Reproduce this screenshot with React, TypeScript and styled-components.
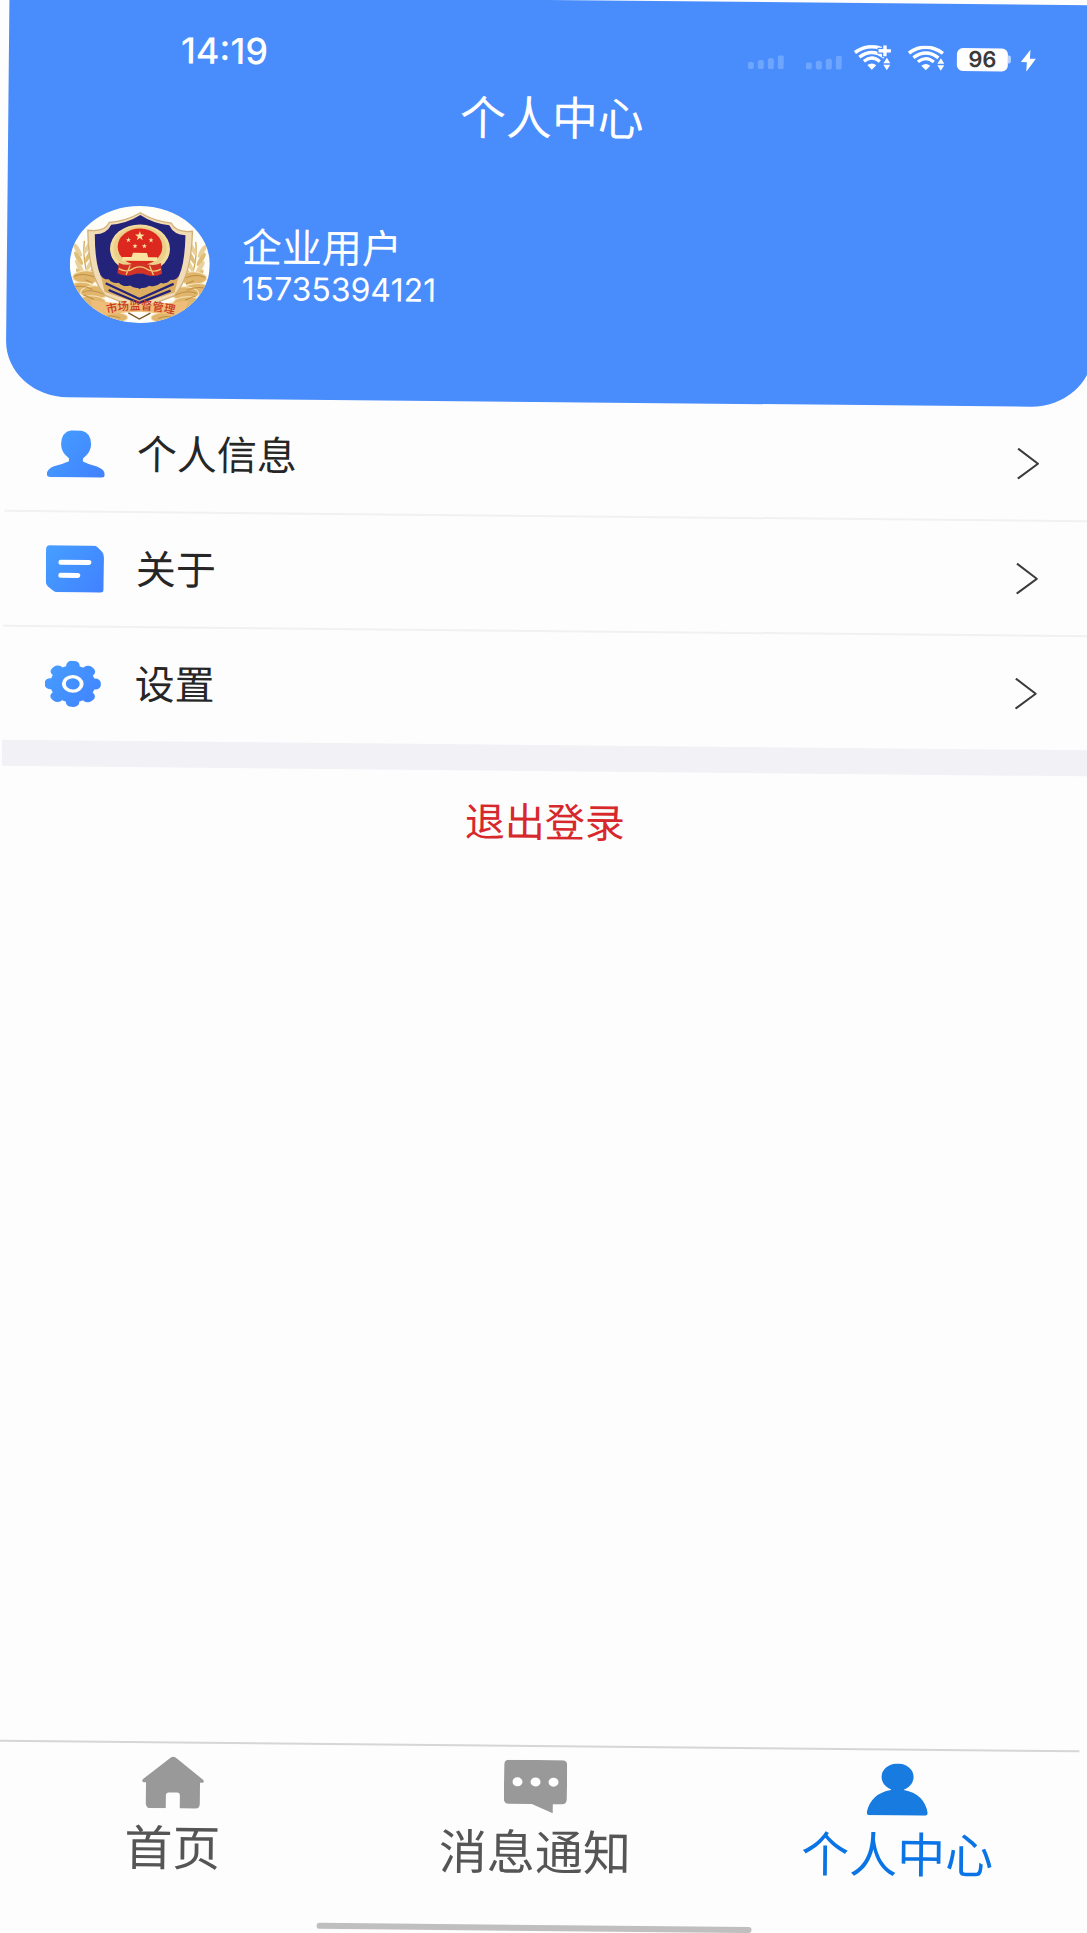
import type { ReactNode } from "react";
import styled, { createGlobalStyle } from "styled-components";

const palette = {
  page: "#fdfdfd",
  header: "#498cfb",
  ink: "#262626",
  line: "#f1f1f2",
  band: "#f1f1f6",
  danger: "#d7282c",
  tab: "#555555",
  tabIcon: "#999999",
  active: "#0a74e6",
  activeIcon: "#187be0",
};

const GlobalStyle = createGlobalStyle`
  * {
    box-sizing: border-box;
  }

  body {
    margin: 0;
    overflow: hidden;
    background: ${palette.page};
    font-family: Inter, "Noto Sans CJK SC", sans-serif;
  }

  svg {
    display: block;
    flex: none;
  }
`;

// the whole screen leans slightly clockwise
const Screen = styled.div`
  min-height: 100vh;
  display: flex;
  flex-direction: column;
  background: ${palette.page};
  transform: rotate(0.56deg);
`;

const Header = styled.header`
  height: 402px;
  padding: 32px 60px 0;
  background: ${palette.header};
  border-radius: 0 0 62px 62px / 0 0 56px 56px;
  color: white;
`;

const StatusBar = styled.div`
  height: 44px;
  display: flex;
  align-items: center;
  justify-content: space-between;
  padding-left: 112px;
`;

const Time = styled.span`
  font-size: 36px;
  font-weight: 500;
  line-height: 42px;
`;

const StatusIcons = styled.div`
  display: flex;
  align-items: flex-end;
  gap: 12px;
`;

const IconGroup = styled.div<{ $gap: number }>`
  display: flex;
  align-items: flex-end;
  gap: ${(props) => props.$gap}px;
`;

const Battery = styled.div`
  display: flex;
  align-items: center;
`;

const BatteryBody = styled.span`
  width: 51px;
  height: 23px;
  border-radius: 6px;
  background: white;
  color: #3a3a3a;
  font-size: 22px;
  font-weight: 600;
  line-height: 23px;
  text-align: center;
`;

const BatteryTip = styled.span`
  width: 3px;
  height: 8px;
  border-radius: 0 2px 2px 0;
  background: #b9d5ff;
`;

const Title = styled.h1`
  margin: 10px 0 0;
  font-size: 46px;
  font-weight: 400;
  line-height: 64px;
  text-align: center;
`;

const Profile = styled.div`
  display: flex;
  align-items: center;
  gap: 32px;
  margin: 60px 3px 0;
`;

const UserName = styled.div`
  font-size: 40px;
  line-height: 46px;
`;

const Phone = styled.div`
  font-size: 32px;
  line-height: 36px;
`;

const Menu = styled.nav`
  border-bottom: 26px solid ${palette.band};
`;

const MenuRow = styled.a`
  display: flex;
  align-items: center;
  gap: 32px;
  padding: 0 53px 0 42px;
  color: ${palette.ink};
  font-size: 40px;
  line-height: 113px;
  text-decoration: none;

  & + & {
    border-top: 2px solid ${palette.line};
  }
`;

const MenuLabel = styled.span`
  flex: 1;
`;

const Logout = styled.button`
  align-self: center;
  margin-top: 22px;
  padding: 0 20px;
  border: 0;
  background: none;
  color: ${palette.danger};
  font-family: inherit;
  font-size: 40px;
  line-height: 60px;
`;

const TabBar = styled.nav`
  height: 188px;
  margin-top: auto;
  display: flex;
  flex-direction: column;
  border-top: 2px solid #d6d6d6;
`;

const Tabs = styled.div`
  flex: 1;
  display: grid;
  grid-template-columns: repeat(3, 1fr);
`;

const Tab = styled.a<{ $active?: boolean }>`
  display: flex;
  flex-direction: column;
  align-items: center;
  gap: 10px;
  padding-top: 13px;
  color: ${(props) => (props.$active ? palette.active : palette.tab)};
  font-size: 48px;
  line-height: 60px;
  text-decoration: none;
`;

const HomeIndicator = styled.div`
  width: 40%;
  height: 6px;
  margin: 0 auto 2px;
  border-radius: 3px;
  background: #bfbfbf;
`;

function Signal() {
  return (
    <svg width="36" height="14" viewBox="0 0 36 14" fill="#6ea6ff">
      <rect x="0" y="7" width="6" height="7" rx="2" />
      <rect x="10" y="5" width="6" height="9" rx="2" />
      <rect x="20" y="3" width="6" height="11" rx="2" />
      <rect x="30" y="0" width="6" height="14" rx="2" />
    </svg>
  );
}

function Wifi({ plus }: { plus?: boolean }) {
  return (
    <svg width="37" height="25" viewBox="0 0 37 25" fill="none" stroke="white">
      <path d="M1 7.5Q18 -4.5 35 7.5" strokeWidth="3.6" />
      <path d="M5.5 12Q18 2.5 30.5 12" strokeWidth="3.4" />
      <path d="M10 16.2Q18 9.5 26 16.2" strokeWidth="3.2" />
      <path d="M13.5 20Q18 16.5 22.5 20L18 24.5Z" fill="white" stroke="none" />
      <path
        d="M29.5 18L33 12.5L36.5 18ZM29.5 19.5L33 25L36.5 19.5Z"
        fill="white"
        stroke={palette.header}
        strokeWidth="1"
        paintOrder="stroke"
      />
      {plus && (
        <>
          <path d="M31 -1V12M23.5 5.5H38" stroke={palette.header} strokeWidth="6" />
          <path d="M31 0V11M24.5 5.5H37" strokeWidth="3.4" />
        </>
      )}
    </svg>
  );
}

function Bolt() {
  return (
    <svg width="15" height="22" viewBox="0 0 15 22" fill="white">
      <path d="M9.5 0L0 12.5H6L5.5 22L15 9H9Z" />
    </svg>
  );
}

function Wheat() {
  const ears = [0, 1, 2, 3, 4];
  return (
    <g>
      <path d="M72 138Q62 235 128 325" stroke="#d3aa55" strokeWidth="4" fill="none" />
      {ears.map((i) => (
        <g key={i} fill={i % 2 ? "#dfbe76" : "#e9d09a"}>
          <ellipse
            cx={52 + i * 3}
            cy={165 + i * 25}
            rx="7"
            ry="23"
            transform={`rotate(-32 ${52 + i * 3} ${165 + i * 25})`}
          />
          <ellipse
            cx={80 + i * 4}
            cy={160 + i * 25}
            rx="6"
            ry="21"
            transform={`rotate(28 ${80 + i * 4} ${160 + i * 25})`}
          />
        </g>
      ))}
      <g fill="#dfb66c" stroke="#f7e5bd" strokeWidth="3">
        <ellipse cx="80" cy="246" rx="42" ry="19" />
        <ellipse cx="64" cy="280" rx="40" ry="18" />
        <ellipse cx="104" cy="292" rx="42" ry="20" />
        <ellipse cx="94" cy="322" rx="44" ry="20" />
        <ellipse cx="160" cy="366" rx="44" ry="16" />
      </g>
      <path
        d="M42 244q30-14 70 6M38 278q28-10 60 5M68 292q26-12 66 6M76 254l24 10M72 300l30 12M134 366q24-10 48 2"
        stroke="#c08f42"
        strokeWidth="3"
        fill="none"
      />
    </g>
  );
}

function Emblem() {
  return (
    <svg width="140" height="117" viewBox="29 32 420 350" preserveAspectRatio="none">
      <defs>
        <clipPath id="avatar">
          <ellipse cx="239" cy="207" rx="210" ry="175" />
        </clipPath>
        <path id="ribbonText" d="M120 360Q239 324 366 360" />
        <path id="star" d="M0-10L2.4-3.2L9.5-3L3.8 1.3L5.9 8.1L0 4L-5.9 8.1L-3.8 1.3L-9.5-3L-2.4-3.2Z" />
      </defs>
      <g clipPath="url(#avatar)">
        <rect x="29" y="32" width="420" height="350" fill="#fffdf7" />
        <Wheat />
        <g transform="translate(478 0) scale(-1 1)">
          <Wheat />
        </g>
        <path
          d="M239 52Q200 76 146 82Q132 112 82 106Q84 245 136 300Q190 322 239 340Q288 322 342 300Q394 245 396 106Q346 112 332 82Q278 76 239 52Z"
          fill="#f1dcb5"
          stroke="#d2b27a"
          strokeWidth="4"
        />
        <path
          d="M239 59Q200 84 152 89Q138 118 103 118Q104 220 130 256L239 318L348 256Q374 220 375 118Q340 118 326 89Q278 84 239 59Z"
          fill="#24237a"
        />
        <path
          d="M122 240Q130 254 146 252Q158 266 176 262Q190 276 210 270Q224 280 239 276Q254 280 268 270Q288 276 302 262Q320 266 332 252Q348 254 356 240L344 290L239 324L134 290Z"
          fill="#dcae62"
        />
        <path
          d="M137 264L239 310L341 264M146 284L239 322L332 284"
          fill="none"
          stroke="#24237a"
          strokeWidth="7"
        />
        <path d="M216 268H262L239 280Z" fill="#24237a" />
        <ellipse cx="239" cy="160" rx="90" ry="73" fill="#f3dc9c" />
        <ellipse cx="239" cy="158" rx="80" ry="65" fill="#ecd08a" />
        <ellipse cx="239" cy="154" rx="67" ry="55" fill="#dc281e" />
        <g fill="#fbe3a0">
          <use href="#star" transform="translate(238 122) scale(1.5)" />
          <use href="#star" transform="translate(204 134) scale(.8)" />
          <use href="#star" transform="translate(272 134) scale(.8)" />
          <use href="#star" transform="translate(224 152) scale(.8)" />
          <use href="#star" transform="translate(252 152) scale(.8)" />
          <path d="M218 172H260L264 185H291V196H186V185H214Z" />
        </g>
        <path
          d="M176 202Q195 212 216 206Q239 198 262 206Q283 212 302 202L306 234Q284 246 260 238Q239 228 218 238Q194 246 172 234Z"
          fill="#d33226"
        />
        <path
          d="M176 220Q200 234 222 218Q239 210 256 218Q278 234 302 220M210 210L198 238M268 210L280 238"
          fill="none"
          stroke="#efcb77"
          strokeWidth="4"
        />
        <path
          d="M92 314Q166 326 239 324Q312 326 386 314L370 364Q306 350 239 348Q172 350 108 364Z"
          fill="#edbd79"
        />
        <path
          d="M206 352L239 370L272 352"
          fill="none"
          stroke="#75541f"
          strokeWidth="4"
        />
        <text fill="#c9361c" fontSize="34" fontWeight="500">
          <textPath href="#ribbonText" startOffset="50%" textAnchor="middle">
            市场监督管理
          </textPath>
        </text>
      </g>
    </svg>
  );
}

// 58x47 canvas shared by the menu icons, with the blue gradient they all use
function MenuIcon({ id, children }: { id: string; children: ReactNode }) {
  return (
    <svg width="58" height="47" viewBox="0 0 58 47">
      <defs>
        <linearGradient id={id} x1="0" y1="0" x2="58" y2="47" gradientUnits="userSpaceOnUse">
          <stop offset="0" stopColor="#469fff" />
          <stop offset="1" stopColor="#4181ff" />
        </linearGradient>
      </defs>
      <g fill={`url(#${id})`}>{children}</g>
    </svg>
  );
}

function UserIcon() {
  return (
    <MenuIcon id="user">
      <path d="M24 0H34Q44 2 44 14Q44 22 36 28V31Q42 34 50 36Q58 39 58 44Q58 47 54 47H4Q0 47 0 44Q0 39 7 36Q16 34 22 31V28Q14 22 14 14Q14 2 24 0Z" />
    </MenuIcon>
  );
}

function NoteIcon() {
  return (
    <MenuIcon id="note">
      <path d="M4 0H47Q50 0 52 2L56 6Q58 8 58 12V44Q58 47 54 47H12Q9 47 7 45L2 41Q0 39 0 36V4Q0 0 4 0Z" />
      <path d="M15 17H43M15 30H32" stroke="white" strokeWidth="5" strokeLinecap="round" />
    </MenuIcon>
  );
}

function GearIcon() {
  const teeth = [0, 45, 90, 135, 180, 225, 270, 315];
  return (
    <MenuIcon id="gear">
      <mask id="gearShape">
        <g transform="translate(28 23.5) scale(1.22 1)" fill="white">
          <circle r="18.5" />
          {teeth.map((angle) => (
            <rect
              key={angle}
              x="-5.5"
              y="-23"
              width="11"
              height="12"
              rx="4.5"
              transform={`rotate(${angle})`}
            />
          ))}
          <circle r="7.3" fill="none" stroke="black" strokeWidth="3.2" />
        </g>
      </mask>
      <rect width="58" height="47" mask="url(#gearShape)" />
    </MenuIcon>
  );
}

function Chevron() {
  return (
    <svg width="22" height="32" viewBox="0 0 22 32" fill="none" stroke="#3c3c3c" strokeWidth="2">
      <path d="M1 1L21 16L1 31" />
    </svg>
  );
}

function HomeIcon() {
  return (
    <svg width="62" height="52" viewBox="0 0 62 52" fill={palette.tabIcon}>
      <path d="M28 1.5Q31 -1 34 1.5L61 23Q63 26 60 26H58V47Q58 52 53 52H38V39Q38 36 35 36H27Q24 36 24 39V52H9Q4 52 4 47V26H2Q-1 26 1 23Z" />
    </svg>
  );
}

function MessageIcon() {
  return (
    <svg width="63" height="53" viewBox="0 0 63 53" fill={palette.tabIcon}>
      <path d="M5 0H58Q63 0 63 5V39Q63 44 58 44H49V53L28 44H5Q0 44 0 39V5Q0 0 5 0Z" />
      <g fill="white">
        <ellipse cx="13.5" cy="22" rx="5" ry="4.5" />
        <ellipse cx="31.5" cy="22" rx="5" ry="4.5" />
        <ellipse cx="49.5" cy="22" rx="5" ry="4.5" />
      </g>
    </svg>
  );
}

function PersonIcon() {
  return (
    <svg width="61" height="52" viewBox="0 0 61 52" fill={palette.activeIcon}>
      <ellipse cx="30.5" cy="13.5" rx="16" ry="13.5" />
      <path d="M24 23H37V26.5Q57 30 61 49Q61 52 58 52H3Q0 52 0 49Q4 30 24 26.5Z" />
    </svg>
  );
}

const menuItems = [
  { label: "个人信息", href: "#profile", icon: <UserIcon /> },
  { label: "关于", href: "#about", icon: <NoteIcon /> },
  { label: "设置", href: "#settings", icon: <GearIcon /> },
];

const tabs = [
  { label: "首页", href: "#home", icon: <HomeIcon /> },
  { label: "消息通知", href: "#messages", icon: <MessageIcon /> },
  { label: "个人中心", href: "#me", icon: <PersonIcon />, active: true },
];

export default function App() {
  return (
    <>
      <GlobalStyle />
      <Screen>
        <Header>
          <StatusBar>
            <Time>14:19</Time>
            <StatusIcons>
              <IconGroup $gap={22}>
                <Signal />
                <Signal />
              </IconGroup>
              <IconGroup $gap={17}>
                <Wifi plus />
                <Wifi />
              </IconGroup>
              <IconGroup $gap={10}>
                <Battery>
                  <BatteryBody>96</BatteryBody>
                  <BatteryTip />
                </Battery>
                <Bolt />
              </IconGroup>
            </StatusIcons>
          </StatusBar>
          <Title>个人中心</Title>
          <Profile>
            <Emblem />
            <div>
              <UserName>企业用户</UserName>
              <Phone>15735394121</Phone>
            </div>
          </Profile>
        </Header>
        <Menu>
          {menuItems.map((item) => (
            <MenuRow key={item.href} href={item.href}>
              {item.icon}
              <MenuLabel>{item.label}</MenuLabel>
              <Chevron />
            </MenuRow>
          ))}
        </Menu>
        <Logout type="button">退出登录</Logout>
        <TabBar>
          <Tabs>
            {tabs.map((tab) => (
              <Tab key={tab.href} href={tab.href} $active={tab.active}>
                {tab.icon}
                {tab.label}
              </Tab>
            ))}
          </Tabs>
          <HomeIndicator />
        </TabBar>
      </Screen>
    </>
  );
}
